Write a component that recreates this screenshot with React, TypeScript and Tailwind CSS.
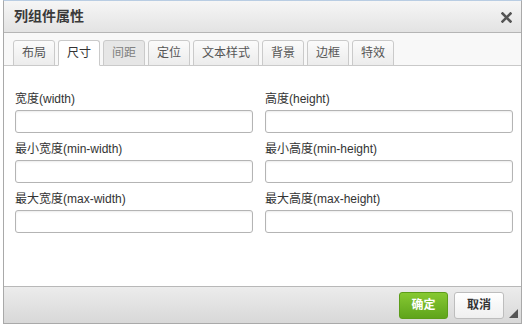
const tabs = [
  { name: "布局" },
  { name: "尺寸", active: true },
  { name: "间距", dim: true },
  { name: "定位" },
  { name: "文本样式" },
  { name: "背景" },
  { name: "边框" },
  { name: "特效" },
];

const fields = [
  ["宽度(width)", "高度(height)"],
  ["最小宽度(min-width)", "最小高度(min-height)"],
  ["最大宽度(max-width)", "最大高度(max-height)"],
];

const font = "font-['Liberation_Sans','Noto_Sans_CJK_SC',sans-serif]";

const App = () => {
  return (
    <div className={`w-[525px] h-[329px] bg-white overflow-hidden ${font}`}>
      <div className="ml-[3px] w-[519px] h-[324px] flex flex-col border border-[#a9a9a9] border-t-[#b9cde3] bg-white">
        {/* title bar */}
        <div className="h-[32px] shrink-0 flex items-center justify-between pl-[10px] pr-[9px] bg-gradient-to-b from-[#f6f6f6] to-[#e3e3e3] border-b border-[#b5b5b5]">
          <span className="text-[14px] font-bold text-[#3a3a3a]">列组件属性</span>
          <svg width="11" height="11" viewBox="0 0 11 11" className="mt-[1px]">
            <path d="M1.5 1.5 L9.5 9.5 M9.5 1.5 L1.5 9.5" stroke="#555" strokeWidth="2.6" strokeLinecap="square" />
          </svg>
        </div>

        {/* tabs */}
        <div className="h-[33px] shrink-0 flex items-end gap-[3px] pl-[9px] bg-[#f8f8f8] border-b border-[#c9c9c9]">
          {tabs.map((t, i) => (
            <div
              key={i}
              className={`h-[26px] -mb-px px-[8px] flex items-center text-[12px] border border-[#cacaca] rounded-t-[3px] ${
                t.active
                  ? "bg-white border-b-white text-[#333]"
                  : t.dim
                  ? "bg-[#e6e6e6] text-[#808080]"
                  : "bg-gradient-to-b from-[#fbfbfb] to-[#ececec] text-[#555]"
              }`}
            >
              {t.name}
            </div>
          ))}
        </div>

        {/* body */}
        <div className="flex-1 bg-white pt-[26px] pl-[11px]">
          {fields.map((row, i) => (
            <div key={i} className="grid grid-cols-[250px_250px] mb-[9px]">
              {row.map((label, j) => (
                <div key={j} className="flex flex-col">
                  <label className="text-[12px] leading-[14px] text-[#333] mb-[4px]">{label}</label>
                  <input
                    className={`h-[23px] ${j === 0 ? "w-[238px]" : "w-[248px]"} rounded-[3px] border border-[#b4b4b4] bg-white shadow-[inset_0_1px_2px_rgba(0,0,0,0.08)] outline-none`}
                  />
                </div>
              ))}
            </div>
          ))}
        </div>

        {/* footer */}
        <div className="h-[37px] shrink-0 relative flex items-center justify-end gap-[6px] pr-[17px] bg-gradient-to-b from-[#ececec] to-[#d8d8d8] border-t border-[#b8b8b8]">
          <button className="w-[49px] h-[27px] rounded-[3px] border border-[#5c9d19] bg-gradient-to-b from-[#86c932] to-[#5fa41b] text-white text-[12px] font-bold">
            确定
          </button>
          <button className="w-[50px] h-[27px] rounded-[3px] border border-[#bdbdbd] bg-gradient-to-b from-[#ffffff] to-[#efefef] text-[#333] text-[12px] font-bold">
            取消
          </button>
          <svg width="9" height="9" viewBox="0 0 9 9" className="absolute right-[3px] bottom-[5px]">
            <path d="M9 0 L9 9 L0 9 Z" fill="#555" />
          </svg>
        </div>
      </div>
    </div>
  );
};

export default App;
